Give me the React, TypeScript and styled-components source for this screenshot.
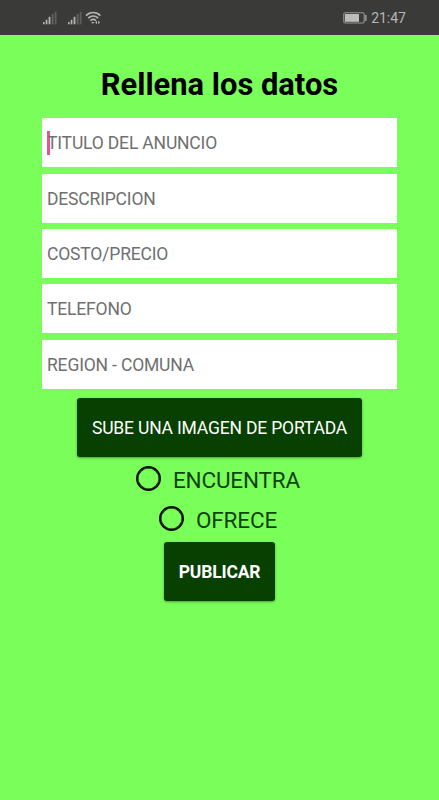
import React, { useState } from "react";
import styled, { createGlobalStyle } from "styled-components";

const GlobalStyle = createGlobalStyle`
  * { box-sizing: border-box; }
  body { margin: 0; background: #7afe59; font-family: Roboto, sans-serif; }
`;

const Screen = styled.main`
  display: flex;
  flex-direction: column;
  align-items: center;
  height: 800px;
  overflow: hidden;
  background: #7afe59;
`;

const StatusBar = styled.header`
  display: flex;
  flex: none;
  align-items: center;
  justify-content: space-between;
  align-self: stretch;
  height: 35px;
  padding: 0 33px 0 42px;
  background: #3a3b39;
  color: #b4b5b3;
`;

const StatusGroup = styled.div`
  display: flex;
  align-items: center;
`;

const Clock = styled.span`
  margin-left: 3px;
  font-size: 14px;
  line-height: 16px;
`;

const Title = styled.h1`
  flex: none;
  margin: 32px 0 15.2px;
  font-size: 30.9px;
  font-weight: 700;
  line-height: 36px;
  color: #000;
`;

const Fields = styled.div`
  display: flex;
  flex: none;
  flex-direction: column;
  gap: 6.4px;
  width: 355px;
`;

const Field = styled.div`
  display: flex;
  align-items: center;
  height: 49px;
  padding: 1px 0 0 5px;
  background: #fff;
  font-size: 17.5px;
  letter-spacing: -0.17px;
  color: #707070;
`;

const Caret = styled.span`
  width: 3px;
  height: 24px;
  margin: -1px -3px 0 0;
  background: #e5558f;
`;

const Button = styled.button<{ $width: number; $bold?: boolean }>`
  flex: none;
  width: ${(p) => p.$width}px;
  height: 59px;
  padding: 1px 0 0;
  border: 0;
  border-radius: 3px;
  background: #074001;
  box-shadow: 0 1px 2.5px rgba(0, 0, 0, 0.4);
  color: #fff;
  font-family: inherit;
  font-size: 17.5px;
  letter-spacing: -0.18px;
  font-weight: ${(p) => (p.$bold ? 700 : 400)};
  white-space: nowrap;
`;

const Options = styled.div`
  display: flex;
  flex: none;
  flex-direction: column;
  align-items: center;
  margin-top: 2px;
`;

const Option = styled.label`
  display: flex;
  align-items: center;
  gap: 12px;
  height: 40px;
  padding-right: 3px;
  font-size: 22.5px;
  letter-spacing: -0.15px;
  line-height: 26px;
  color: #0d4310;
`;

const OptionText = styled.span`
  padding-top: 2px;
`;

const Radio = styled.input`
  flex: none;
  appearance: none;
  width: 25px;
  height: 25px;
  margin: 0;
  border: 2px solid #050d03;
  border-radius: 50%;
  box-shadow: inset 0 0 0 0.5px #050d03;
  &:checked { box-shadow: inset 0 0 0 5px #7afe59; background: #050d03; }
`;

const Spacer = styled.div<{ $size: number }>`
  flex: none;
  height: ${(p) => p.$size}px;
`;

const SignalSvg = styled.svg<{ $gap: number }>`
  display: block;
  margin-right: ${(p) => p.$gap}px;
`;

const Signal = ({ gap }: { gap: number }) => (
  <SignalSvg $gap={gap} width="15" height="14" viewBox="0 0 15 14" fill="currentColor">
    <rect x="1" y="11" width="1.6" height="2.3" />
    <rect x="3.7" y="8.8" width="1.7" height="4.5" />
    <rect x="6.6" y="5.8" width="1.8" height="7.5" />
    <rect x="9.7" y="3" width="1.8" height="10.3" opacity="0.35" />
    <rect x="12.7" y="0.7" width="1.8" height="12.6" opacity="0.3" />
  </SignalSvg>
);

const Wifi = () => (
  <svg width="17" height="14" viewBox="0 0 17 14" fill="none" stroke="currentColor" strokeWidth="1.6">
    <path d="M1 4.6C5.2.5 11.2.5 15.4 4.6" />
    <path d="M3.2 7.2c3-2.8 7-2.8 10 0" />
    <path d="M5.4 9.7c1.8-1.6 3.8-1.6 5.6 0" />
    <path d="M6.3 11h3l-1.5 2zM12 9.7l-1.9 1.8 1.9 1.8zM13.2 9.7l1.9 1.8-1.9 1.8z" fill="currentColor" stroke="none" />
  </svg>
);

const Battery = () => (
  <svg width="25" height="12" viewBox="0 0 25 12">
    <rect x="0.8" y="0.8" width="20.4" height="10.2" rx="1.5" fill="none" stroke="#979896" strokeWidth="1.1" />
    <rect x="2" y="2" width="14" height="7.8" fill="#bcbdbb" />
    <rect x="22.2" y="3" width="1.4" height="6" rx="0.5" fill="#a0a19f" />
  </svg>
);

const fields = ["TITULO DEL ANUNCIO", "DESCRIPCION", "COSTO/PRECIO", "TELEFONO", "REGION - COMUNA"];

export default function App() {
  const [kind, setKind] = useState("");
  return (
    <>
      <GlobalStyle />
      <Screen>
        <StatusBar>
          <StatusGroup>
            <Signal gap={10} />
            <Signal gap={3} />
            <Wifi />
          </StatusGroup>
          <StatusGroup>
            <Battery />
            <Clock>21:47</Clock>
          </StatusGroup>
        </StatusBar>
        <Title>Rellena los datos</Title>
        <Fields>
          {fields.map((label, i) => (
            <Field key={label}>
              {i === 0 && <Caret />}
              {label}
            </Field>
          ))}
        </Fields>
        <Spacer $size={9.2} />
        <Button $width={285}>SUBE UNA IMAGEN DE PORTADA</Button>
        <Options>
          {["ENCUENTRA", "OFRECE"].map((o) => (
            <Option key={o}>
              <Radio type="radio" name="kind" checked={kind === o} onChange={() => setKind(o)} />
              <OptionText>{o}</OptionText>
            </Option>
          ))}
        </Options>
        <Spacer $size={3} />
        <Button $width={111} $bold>PUBLICAR</Button>
      </Screen>
    </>
  );
}
